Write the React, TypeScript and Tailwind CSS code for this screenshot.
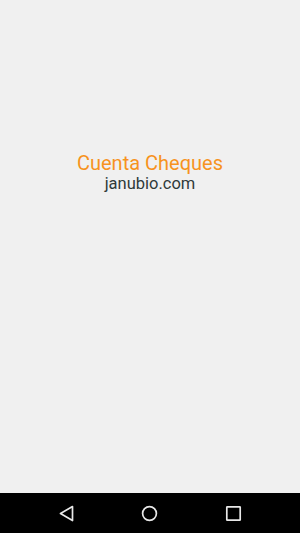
export default function App() {
  return (
    <div className="flex h-[533px] w-[300px] flex-col bg-[#f0f0f0] font-['Roboto',sans-serif]">
      <div className="flex flex-1 flex-col items-center pt-[152px]">
        <div className="text-[20px] leading-[22px] text-[#f7931e]">Cuenta Cheques</div>
        <div className="text-[16.5px] leading-[19px] text-[#2f3a3a]">janubio.com</div>
      </div>
      <div className="flex h-[40px] items-center justify-between bg-black pl-[58px] pr-[58px]">
        <svg width="17" height="17" viewBox="0 0 17 17">
          <path d="M14.5 1.5 L2.5 8.5 L14.5 15.5 Z" fill="none" stroke="#e8e8e8" strokeWidth="1.7" strokeLinejoin="round" />
        </svg>
        <svg width="17" height="17" viewBox="0 0 17 17" className="ml-[-1px]">
          <circle cx="8.5" cy="8.5" r="6.9" fill="none" stroke="#e8e8e8" strokeWidth="1.7" />
        </svg>
        <svg width="17" height="17" viewBox="0 0 17 17">
          <rect x="1.8" y="1.8" width="13.4" height="13.4" rx="0.5" fill="none" stroke="#e8e8e8" strokeWidth="1.7" />
        </svg>
      </div>
    </div>
  );
}
